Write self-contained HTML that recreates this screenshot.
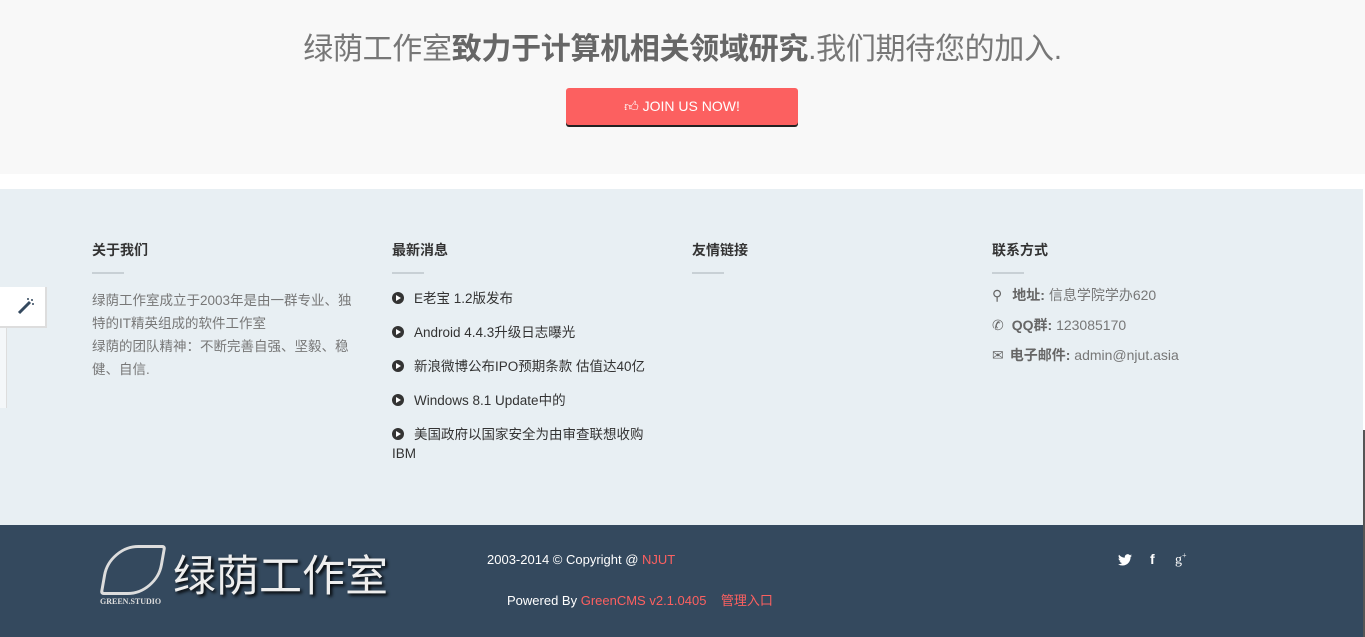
<!DOCTYPE html>
<html><head><meta charset="utf-8"><style>
*{margin:0;padding:0;box-sizing:border-box}
body{width:1365px;height:637px;overflow:hidden;background:#fff;font-family:"Liberation Sans","Noto Sans CJK SC",sans-serif;position:relative}
.top{position:absolute;left:0;top:0;width:1365px;height:174px;background:#f8f8f8}
.top h2{position:absolute;top:24px;left:0;width:1365px;text-align:center;font-size:30px;font-weight:normal;color:#777;letter-spacing:-0.3px}
.top h2 b{color:#666}
.btn{position:absolute;left:566px;top:88px;width:232px;height:37px;background:#fc6060;border-radius:3px;box-shadow:0 2px 0 #222;color:#fff;font-size:14px;text-align:center;line-height:36px}
.mid{position:absolute;left:0;top:189px;width:1363px;height:336px;background:#e8eff3}
.col{position:absolute;top:240px;font-size:13px;color:#777}
.col h4{font-size:14px;color:#333;font-weight:bold;height:20px}
.col .ln{width:32px;height:2px;background:#c8d0d5;margin-top:12px;margin-bottom:15px}
.col p{line-height:23px;width:272px;font-size:13.5px}
.news div{color:#333;font-size:13.5px;margin-bottom:15px;line-height:19px;width:270px}
.news i{display:inline-block;width:12px;height:12px;border-radius:50%;background:#333;margin-right:10px;vertical-align:-1px;position:relative}
.news i:after{content:"";position:absolute;left:4px;top:3px;border-style:solid;border-color:transparent transparent transparent #fff;border-width:3px 0 3px 5px}
.ct div{margin-bottom:11px;font-size:14px;color:#777;line-height:19px}
.ct b{color:#666}
.bot{position:absolute;left:0;top:525px;width:1363px;height:112px;background:#34495e;color:#fff;font-size:13px}
.red{color:#fc6060}
.side{position:absolute;left:0;top:287px;width:47px;height:41px;background:#fff;border-right:2px solid #ddd;border-bottom:2px solid #ddd}
.side2{position:absolute;left:0;top:328px;width:7px;height:80px;border-right:1px solid #ddd;background:#f4f7f9}
.sb{position:absolute;left:1363px;top:430px;width:2px;height:207px;background:#555}
</style></head><body>
<div class="top"><h2>绿荫工作室<b>致力于计算机相关领域研究</b>.我们期待您的加入.</h2>
<div class="btn">👍︎ JOIN US NOW!</div></div>
<div class="mid"></div>
<div class="side"><svg width="46" height="40"><line x1="19" y1="26" x2="30" y2="15" stroke="#34495e" stroke-width="3"/><circle cx="32" cy="13" r="1" fill="#34495e"/><circle cx="28" cy="12" r="1" fill="#34495e"/><circle cx="33" cy="17" r="1" fill="#34495e"/></svg></div>
<div class="side2"></div>
<div class="col" style="left:92px"><h4>关于我们</h4><div class="ln"></div><p>绿荫工作室成立于2003年是由一群专业、独特的IT精英组成的软件工作室<br>绿荫的团队精神：不断完善自强、坚毅、稳健、自信.</p></div>
<div class="col news" style="left:392px"><h4>最新消息</h4><div class="ln"></div>
<div style="margin-top:4px"><i></i>E老宝 1.2版发布</div><div><i></i>Android 4.4.3升级日志曝光</div><div><i></i>新浪微博公布IPO预期条款 估值达40亿</div><div><i></i>Windows 8.1 Update中的</div><div><i></i>美国政府以国家安全为由审查联想收购IBM</div></div>
<div class="col" style="left:692px"><h4>友情链接</h4><div class="ln"></div></div>
<div class="col ct" style="left:992px"><h4>联系方式</h4><div class="ln"></div>
<div style="margin-top:-3px"><span style="color:#666;margin-right:10px">&#9906;</span><b>地址:</b> 信息学院学办620</div>
<div><span style="color:#666;margin-right:8px">&#9990;</span><b>QQ群:</b> 123085170</div>
<div><span style="color:#666;margin-right:6px">&#9993;</span><b>电子邮件:</b> admin@njut.asia</div></div>
<div class="bot">
<div style="position:absolute;left:104px;top:20px;width:58px;height:50px;border:3px solid #ddd;border-radius:30px 4px 30px 4px;transform:skewX(-10deg)"></div>
<div style="position:absolute;left:100px;top:72px;font-size:8px;font-family:'Liberation Serif',serif;font-weight:bold;color:#ddd">GREEN.STUDIO</div>
<div style="position:absolute;left:173px;top:22px;font-size:43px;color:#eee;text-shadow:2px 2px 3px #000;font-family:'Noto Sans CJK SC',sans-serif;line-height:52px">绿荫工作室</div>
<div style="position:absolute;left:487px;top:27px">2003-2014 © Copyright @ <span class="red">NJUT</span></div>
<div style="position:absolute;left:507px;top:65px">Powered By <span class="red">GreenCMS v2.1.0405</span> &nbsp;&nbsp; <span class="red">管理入口</span></div>
<svg style="position:absolute;left:1118px;top:29px" width="14" height="12" viewBox="0 0 24 20"><path fill="#fff" d="M24 2.4a10 10 0 0 1-2.8.8A5 5 0 0 0 23.3.5a10 10 0 0 1-3.1 1.2A4.9 4.9 0 0 0 11.8 6 14 14 0 0 1 1.7.9a4.9 4.9 0 0 0 1.5 6.6A4.9 4.9 0 0 1 1 6.9a4.9 4.9 0 0 0 3.9 4.8 5 5 0 0 1-2.2.1 4.9 4.9 0 0 0 4.6 3.4A9.9 9.9 0 0 1 0 17.2 14 14 0 0 0 7.5 19.4c9.1 0 14-7.5 14-14v-.6A10 10 0 0 0 24 2.4z"/></svg>
<div style="position:absolute;left:1150px;top:26px;font-weight:bold;font-size:14px">f</div>
<div style="position:absolute;left:1175px;top:26px;font-size:14px;font-family:'Liberation Serif',serif">g<sup style="font-size:8px">+</sup></div>
</div>
<div class="sb"></div>
</body></html>
